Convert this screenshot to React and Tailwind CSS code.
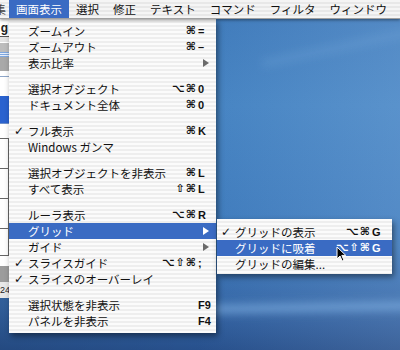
import React from "react";

const rows = [
  { t: "ズームイン", mod: "⌘", key: "=" },
  { t: "ズームアウト", mod: "⌘", key: "–" },
  { t: "表示比率", arrow: true },
  "sep",
  { t: "選択オブジェクト", mod: "⌥⌘", key: "0" },
  { t: "ドキュメント全体", mod: "⌘", key: "0" },
  "sep",
  { t: "フル表示", check: true, mod: "⌘", key: "K" },
  { t: "Windows ガンマ" },
  "sep",
  { t: "選択オブジェクトを非表示", mod: "⌘", key: "L" },
  { t: "すべて表示", mod: "⇧⌘", key: "L" },
  "sep",
  { t: "ルーラ表示", mod: "⌥⌘", key: "R" },
  { t: "グリッド", arrow: true, hl: true },
  { t: "ガイド", arrow: true },
  { t: "スライスガイド", check: true, mod: "⌥⇧⌘", key: ";" },
  { t: "スライスのオーバーレイ", check: true },
  "sep",
  { t: "選択状態を非表示", key: "F9" },
  { t: "パネルを非表示", key: "F4" },
];

const sub = [
  { t: "グリッドの表示", check: true, mod: "⌥⌘", key: "G" },
  { t: "グリッドに吸着", hl: true, mod: "⌥⇧⌘", key: "G" },
  { t: "グリッドの編集..." },
];

function Arrow({ hl }) {
  return (
    <svg width="6" height="8" viewBox="0 0 6 8" className="block">
      <polygon points="0,0 6,4 0,8" fill={hl ? "#ffffff" : "#6a6a6a"} />
    </svg>
  );
}

function Row({ r, checkW, keyW }) {
  return (
    <div
      className={`flex items-center h-[16px] leading-[16px] whitespace-nowrap ${
        r.hl ? "bg-[#3a6bc3] text-white" : "text-[#111]"
      }`}
    >
      <span
        className={`${checkW} shrink-0 text-[12px] font-['DejaVu_Sans',sans-serif] font-bold`}
      >
        {r.check ? "✓" : ""}
      </span>
      <span className="flex-1">{r.t}</span>
      {r.mod && (
        <span className="pr-[1px] text-[11px] tracking-[1px] font-['DejaVu_Sans',sans-serif] font-bold">
          {r.mod}
        </span>
      )}
      <span
        className={`${keyW} shrink-0 text-[11px] font-['Liberation_Sans','DejaVu_Sans',sans-serif] font-bold flex items-center`}
      >
        {r.arrow ? (
          <span className="pl-[5px]">
            <Arrow hl={r.hl} />
          </span>
        ) : (
          r.key || ""
        )}
      </span>
    </div>
  );
}

export default function App() {
  return (
    <div className="relative w-[400px] h-[350px] overflow-hidden font-['Noto_Sans_CJK_JP','Noto_Sans',sans-serif] text-[11.5px] bg-[linear-gradient(90deg,rgba(0,0,0,0.1)_0%,rgba(0,0,0,0.02)_50%,rgba(255,255,255,0.1)_100%),linear-gradient(180deg,#3f7bbd_0%,#4786c6_30%,#3f7cbf_70%,#3567a8_88%,#28528f_100%)]">
      {/* desktop streaks */}
      <div className="absolute left-[180px] top-[303px] w-[260px] h-[9px] bg-[#86b6e6]/60 blur-[4px] -rotate-1" />
      <div className="absolute left-[260px] top-[40px] w-[200px] h-[6px] bg-[#9cc6ee]/20 blur-[5px] -rotate-12" />

      {/* menu bar */}
      <div className="relative z-20 h-[19px] flex leading-[18px] text-[#111] border-b border-[#a0a0a0] bg-[repeating-linear-gradient(180deg,#f5f5f5_0px,#f5f5f5_2px,#e8e8e8_2px,#e8e8e8_4px)] shadow-[0_1px_3px_rgba(0,0,0,0.45)]">
        <span className="w-[9px] overflow-hidden flex justify-end">
          <span className="shrink-0 pr-[3px] text-[#444]">集</span>
        </span>
        <span className="px-[7px] bg-[#3a6bc3] text-white">画面表示</span>
        <span className="px-[7px]">選択</span>
        <span className="px-[7px]">修正</span>
        <span className="px-[7px]">テキスト</span>
        <span className="px-[7px]">コマンド</span>
        <span className="px-[7px]">フィルタ</span>
        <span className="px-[7px]">ウィンドウ</span>
      </div>

      {/* background application window strip */}
      <div className="absolute left-0 top-[19px] w-[9px] h-[279px] flex flex-col bg-white">
        <div className="h-[18px] flex justify-end items-center border-b border-[#555] overflow-hidden">
          <span className="pr-[1px] text-[12px] font-bold font-['Liberation_Sans',sans-serif] text-[#222]">g</span>
        </div>
        <div className="h-[5px] bg-[#e4e4e4]" />
        <div className="h-[10px] bg-[#bdbdbd] border-t border-white" />
        <div className="h-[5px] bg-[repeating-linear-gradient(180deg,#7fa8e0_0px,#7fa8e0_1px,#e6eefa_1px,#e6eefa_2px)]" />
        <div className="h-[14px] bg-[#a9a9a9]" />
        <div className="h-[6px] bg-white border-b border-[#8fa7c9]" />
        <div className="h-[19px] bg-white" />
        <div className="h-[28px] bg-[#2a62cf] border-b border-[#6e8fc9]" />
        <div className="h-[15px] bg-white border-b border-[#666]" />
        <div className="h-[30px] bg-white border-b border-[#666] border-r" />
        <div className="h-[30px] bg-white border-b border-[#666] border-r" />
        <div className="h-[30px] bg-white border-b border-[#666] border-r" />
        <div className="h-[27px] bg-white border-b border-[#666] border-r" />
        <div className="h-[10px] bg-white" />
        <div className="h-[16px] bg-[#9c9c9c]" />
        <div className="flex-1 bg-[#e8e8e8] flex items-center overflow-hidden">
          <span className="text-[9px] leading-none font-['Liberation_Sans',sans-serif] text-[#222]">24</span>
        </div>
      </div>

      {/* dropdown menu */}
      <div className="absolute z-10 left-[9px] top-[19px] w-[207px] py-[4px] bg-[repeating-linear-gradient(180deg,#fbfbfb_0px,#fbfbfb_2px,#eeeeee_2px,#eeeeee_4px)] shadow-[2px_3px_6px_rgba(0,0,0,0.45)]">
        {rows.map((r, i) =>
          r === "sep" ? (
            <div key={i} className="h-[10px]" />
          ) : (
            <Row key={i} r={r} checkW="w-[19px] pl-[5px]" keyW="w-[18px]" />
          )
        )}
      </div>

      {/* submenu */}
      <div className="absolute z-20 left-[217px] top-[219px] w-[175px] pt-[5px] pb-[2px] bg-[repeating-linear-gradient(180deg,#fbfbfb_0px,#fbfbfb_2px,#eeeeee_2px,#eeeeee_4px)] shadow-[2px_3px_6px_rgba(0,0,0,0.45)]">
        {sub.map((r, i) => (
          <Row key={i} r={r} checkW="w-[18px] pl-[4px]" keyW="w-[20px]" />
        ))}
      </div>

      {/* cursor */}
      <svg
        className="absolute z-30 left-[336px] top-[246px]"
        width="11"
        height="17"
        viewBox="0 0 11 17"
      >
        <path
          d="M1 1 L1 13 L4 10 L6.2 15 L8 14.2 L5.8 9.4 L9.8 9.4 Z"
          fill="#000"
          stroke="#fff"
          strokeWidth="1"
          strokeLinejoin="round"
        />
      </svg>
    </div>
  );
}
